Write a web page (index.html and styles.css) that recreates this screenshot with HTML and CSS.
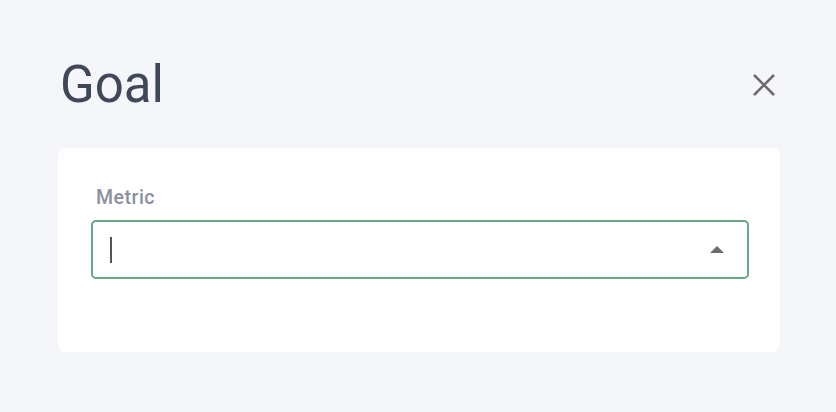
FILE: index.html
```html
<!DOCTYPE html>
<html lang="en">
<head>
  <meta charset="UTF-8" />
  <title>Goal</title>
  <link rel="stylesheet" href="styles.css">
</head>
<body>
  <div class="dialog">
    <div class="header">
      <div class="title">Goal</div>
      <button class="close" aria-label="Close">
        <svg width="24" height="24" viewBox="0 0 24 24">
          <path d="M2 2 L22 22 M22 2 L2 22" stroke="#6b6b6b" stroke-width="2.6" fill="none"/>
        </svg>
      </button>
    </div>

    <div class="card">
      <div class="field">
        <label>Metric</label>
        <div class="select">
          <span class="caret"></span>
          <span class="arrow"></span>
        </div>
      </div>
    </div>
  </div>
</body>
</html>
```

FILE: styles.css
```css
* {
  box-sizing: border-box;
}

body {
  margin: 0;
  background: #f5f6fa;
  font-family: Roboto, "Noto Sans", sans-serif;
  height: 100vh;
}

.dialog {
  padding: 50px 56px 0 58px;
}

.header {
  display: flex;
  align-items: center;
  justify-content: space-between;
  height: 68px;
  margin-bottom: 30px;
}

.title {
  font-size: 51px;
  color: #3f4759;
  padding-left: 2px;
  line-height: 1;
}

.close {
  border: none;
  background: none;
  padding: 0;
  width: 24px;
  height: 24px;
  margin-right: 4px;
  margin-top: 2px;
  cursor: pointer;
}

.card {
  background: #fff;
  border-radius: 8px;
  height: 204px;
  padding: 38px 31px 0 33px;
}

.field label {
  display: block;
  font-size: 19.5px;
  font-weight: 500;
  letter-spacing: 0.5px;
  line-height: 24px;
  color: #8a90a0;
  margin: 0 0 10px 5px;
}

.select {
  height: 59px;
  border: 2px solid #68a985;
  border-radius: 5px;
  display: flex;
  align-items: center;
  justify-content: space-between;
  padding: 0 23px 0 17px;
}

.caret {
  width: 2px;
  height: 26px;
  background: #555;
}

.arrow {
  width: 0;
  height: 0;
  border-left: 7px solid transparent;
  border-right: 7px solid transparent;
  border-bottom: 7px solid #6b6b6b;
}
```
